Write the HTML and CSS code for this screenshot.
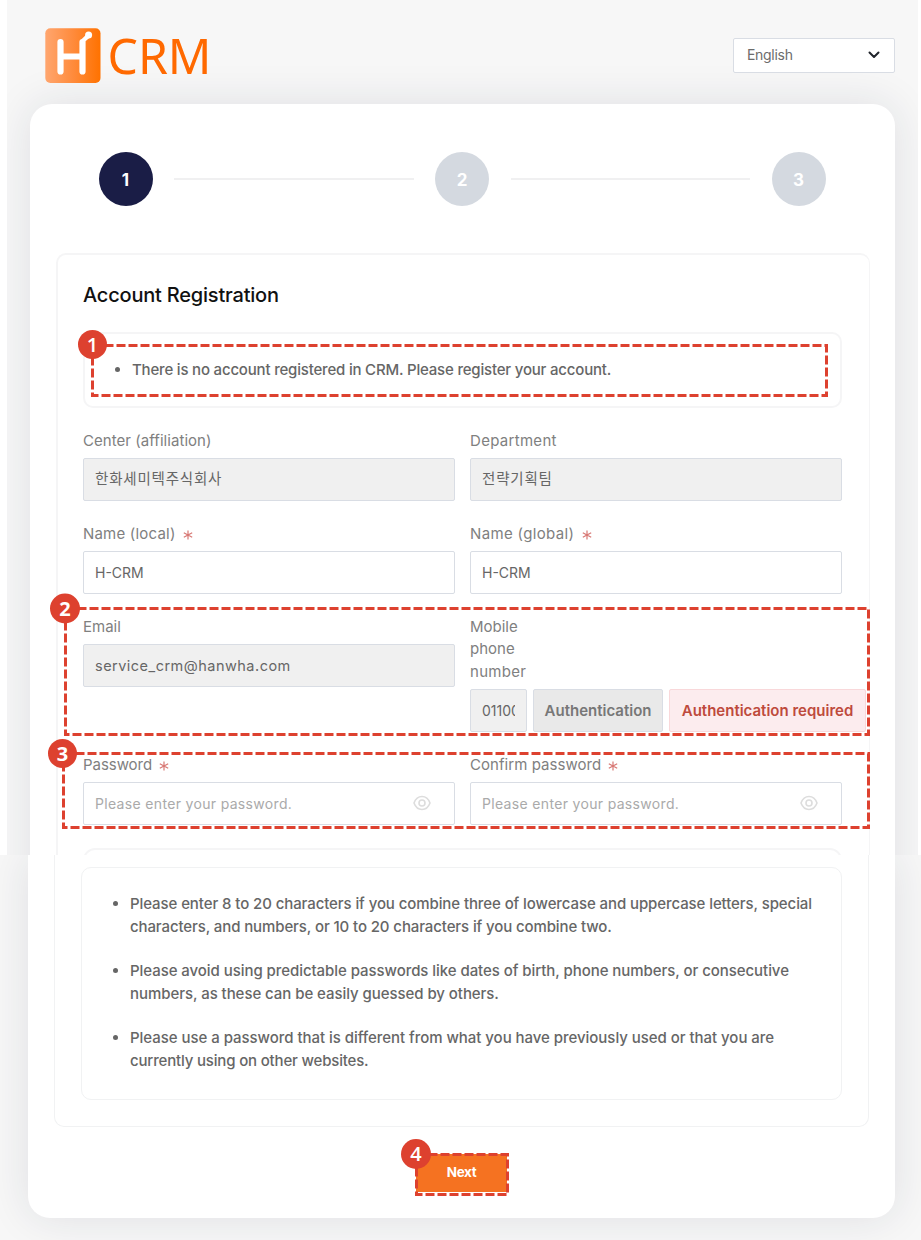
FILE: index.html
```html
<!DOCTYPE html>
<html lang="en">
<head>
<meta charset="utf-8">
<title>H CRM – Account Registration</title>
<link rel="stylesheet" href="styles.css">
</head>
<body>
<main class="page">
  <section class="upper">
    <header class="header">
      <svg class="logo" width="166" height="56" viewBox="0 0 166 56" role="img" aria-label="H CRM">
        <defs><linearGradient id="brand"><stop offset="0" stop-color="#ffa66f"/><stop offset=".5" stop-color="#ff8b3c"/><stop offset="1" stop-color="#ff7200"/></linearGradient></defs>
        <rect x=".3" y=".3" width="55.2" height="54.6" rx="5" fill="url(#brand)"/>
        <path d="M15.5 14v29.500M37.500 14v29.500M15.500 28.500h22" fill="none" stroke="#fff" stroke-width="6.200" stroke-linecap="round"/>
        <path d="M37.700 14c0-3 4.700-3.300 5.500-7" fill="none" stroke="#fff" stroke-width="4.500"/>
        <circle cx="43.600" cy="7" r="3.500" fill="#fff"/>
        <text x="62.500" y="45.700" class="logo-text" textLength="104" lengthAdjust="spacingAndGlyphs">CRM</text>
      </svg>
      <button class="language">English
        <svg width="12" height="8" viewBox="0 0 12 8"><path d="M1.500 1.500 6 6l4.500-4.500" fill="none" stroke="#20242b" stroke-width="2" stroke-linecap="round" stroke-linejoin="round"/></svg>
      </button>
    </header>
    <div class="card card-top">
      <div class="steps">
        <span class="step active">1</span><i class="line"></i><span class="step">2</span><i class="line"></i><span class="step">3</span>
      </div>
      <div class="frame frame-top">
        <h1 class="title">Account Registration</h1>
        <ul class="notice"><li>There is no account registered in CRM. Please register your account.</li></ul>
        <div class="fields">
          <div class="field"><label class="label l-center">Center (affiliation)</label><input class="input korean" value="한화세미텍주식회사" readonly></div>
          <div class="field"><label class="label l-dept">Department</label><input class="input korean" value="전략기획팀" readonly></div>
          <div class="field"><label class="label l-local">Name (local) <svg class="star" viewBox="0 0 10 10"><path d="M5 .5v9M.8 2.700l8.400 4.600M.8 7.300l8.400-4.600"/></svg></label><input class="input" value="H-CRM"></div>
          <div class="field"><label class="label l-global">Name (global) <svg class="star" viewBox="0 0 10 10"><path d="M5 .5v9M.8 2.700l8.400 4.600M.8 7.300l8.400-4.600"/></svg></label><input class="input" value="H-CRM"></div>
          <div class="field"><label class="label">Email</label><input class="input email" value="service_crm@hanwha.com" readonly></div>
          <div class="field">
            <label class="label phone-label">Mobile phone <span class="l-number">number</span></label>
            <div class="phone-row"><input class="input phone" value="01100" readonly><button class="auth">Authentication</button><span class="required">Authentication required</span></div>
          </div>
          <div class="field"><label class="label l-password">Password <svg class="star" viewBox="0 0 10 10"><path d="M5 .5v9M.8 2.700l8.400 4.600M.8 7.300l8.400-4.600"/></svg></label>
            <div class="input password"><span>Please enter your password.</span><svg class="eye" viewBox="0 0 18 16"><path d="M1 8c1.500-4 4.500-6.500 8-6.500S15.500 4 17 8c-1.500 4-4.500 6.500-8 6.500S2.500 12 1 8Z"/><circle cx="9" cy="8" r="3"/></svg></div></div>
          <div class="field"><label class="label l-confirm">Confirm password <svg class="star" viewBox="0 0 10 10"><path d="M5 .5v9M.8 2.700l8.400 4.600M.8 7.300l8.400-4.600"/></svg></label>
            <div class="input password"><span>Please enter your password.</span><svg class="eye" viewBox="0 0 18 16"><path d="M1 8c1.500-4 4.500-6.500 8-6.500S15.500 4 17 8c-1.500 4-4.500 6.500-8 6.500S2.500 12 1 8Z"/><circle cx="9" cy="8" r="3"/></svg></div></div>
        </div>
        <div class="next-box"></div>
      </div>
    </div>
  </section>
  <section class="lower">
    <div class="card card-bottom">
      <div class="frame frame-bottom">
        <ul class="rules">
          <li><span class="r1">Please enter 8 to 20 characters if you combine three of lowercase and uppercase letters, special</span><br><span class="r2">characters, and numbers, or 10 to 20 characters if you combine two.</span></li>
          <li><span class="r3">Please avoid using predictable passwords like dates of birth, phone numbers, or consecutive</span><br><span class="r4">numbers, as these can be easily guessed by others.</span></li>
          <li><span class="r5">Please use a password that is different from what you have previously used or that you are</span><br><span class="r6">currently using on other websites.</span></li>
        </ul>
      </div>
      <button class="next">Next</button>
    </div>
  </section>
  <svg class="marks" width="921" height="1240" viewBox="0 0 921 1240">
    <g class="dash">
      <rect x="92.500" y="345.500" width="734" height="50"/>
      <rect x="65.500" y="608.500" width="803" height="126"/>
      <rect x="63.500" y="753.500" width="805" height="74"/>
      <rect x="416.500" y="1154.500" width="91" height="40"/>
    </g>
    <g class="badge">
      <circle cx="92.500" cy="344.500" r="14.500"/><text x="92.500" y="351.500">1</text>
      <circle cx="65" cy="608.500" r="15"/><text class="strong" x="65" y="615.500">2</text>
      <circle cx="62.500" cy="753.500" r="14.500"/><text class="strong" x="62.500" y="760.500">3</text>
      <circle cx="416" cy="1154" r="15"/><text x="416" y="1161">4</text>
    </g>
  </svg>
</main>
</body>
</html>
```
FILE: styles.css
```css
* { box-sizing: border-box; }
body { margin: 0; background: #fff; font-family: Inter, "Noto Sans CJK KR", sans-serif; color: #666; }
button { font-family: inherit; }
.page { position: relative; width: 921px; height: 1240px; overflow: hidden; }
.upper { height: 855px; margin: 0 3px 0 7px; background: #f7f7f7; overflow: hidden; }
.lower { height: 385px; background: #f7f7f7; overflow: hidden; }
.header { height: 104px; padding: 28px 23px 0 38px; display: flex; justify-content: space-between; align-items: flex-start; }
.logo { overflow: visible; }
.logo-text { font: 49px "Noto Sans", sans-serif; fill: #ff6900; }
.language { margin-top: 10px; width: 162px; height: 35px; padding: 0 14px 2px 13px; display: flex; align-items: center; justify-content: space-between; border: 1px solid #d9dde4; border-radius: 2px; background: #fff; color: #6c6c6c; font-size: 14px; letter-spacing: -.3px; }

.card { background: #fff; box-shadow: 0 0 44px rgba(30, 38, 60, .11); }
.card-top { width: 865px; height: 800px; margin-left: 23px; padding: 48px 26px 0 25.500px; border-radius: 22px 22px 0 0; }
.card-bottom { width: 867px; height: 363px; margin-left: 28px; padding: 0 26px; border-radius: 0 0 22px 22px; display: flex; flex-direction: column; align-items: center; }
.steps { height: 54px; padding: 0 43.500px 0 43px; display: flex; align-items: center; gap: 21.500px; }
.step { width: 54px; height: 54px; flex: none; border-radius: 50%; background: #d4d9e0; color: #fff; font-size: 17px; font-weight: 700; line-height: 56px; text-align: center; }
.step.active { background: #1a1d46; }
.line { flex: 1; height: 2px; background: #f0f0f1; }

.frame { border: 1px solid #f1f2f3; }
.frame-top { width: 814px; height: 650px; margin-top: 47px; padding: 0 25.500px; border: 2px solid #f5f5f6; border-right-width: 1px; border-radius: 10px 10px 0 0; }
.title { margin: 26px 0 22px; color: #111; font-size: 20px; font-weight: 500; line-height: 29px; letter-spacing: -.2px; }
.notice { width: 759px; height: 76px; margin: 0; padding: 0 0 0 47px; border: 2px solid #f5f5f6; border-radius: 10px; font-size: 15px; font-weight: 500; line-height: 72px; letter-spacing: -.19px; }
.fields { width: 759px; margin-top: 21px; display: grid; grid-template-columns: 372px 372px; column-gap: 15px; row-gap: 21px; }
.label { display: block; height: 22.500px; margin-bottom: 6.500px; color: #808080; font-size: 15px; line-height: 23px; letter-spacing: 0; }
.l-center { letter-spacing: .05px; }
.l-dept { letter-spacing: .3px; }
.l-local { letter-spacing: .2px; }
.l-global { letter-spacing: .35px; }
.l-password { letter-spacing: -.05px; }
.l-confirm { letter-spacing: .05px; }
.phone-label { width: 62px; height: 67.500px; padding-top: .5px; line-height: 22.700px; }
.l-number { letter-spacing: .3px; }
.star { width: 10px; height: 10px; margin-left: 3px; vertical-align: -1px; fill: none; stroke: #d87874; stroke-width: 1.200; }
.input { display: block; width: 100%; height: 43px; padding: 0 11px 1px; border: 1px solid #d9dde4; border-radius: 2px; background: #fff; color: #666; font-family: inherit; font-size: 14px; outline: 0; }
.input[readonly] { background: #f0f0f0; }
.email { font-size: 14.500px; letter-spacing: .48px; }
.korean { padding-bottom: 4px; font-size: 14.500px; letter-spacing: .8px; }
.phone-row { display: flex; gap: 6px; width: 397px; }
.phone { width: 57px; }
.auth, .required { height: 43px; border: 1px solid #d9dde4; border-radius: 2px; font-size: 15px; font-weight: 600; line-height: 42px; text-align: center; white-space: nowrap; padding: 0; }
.auth { width: 130px; background: #e9e9e9; color: #777; }
.required { width: 197px; border-color: #f9d8da; background: #fcecee; color: #be4a3c; }
.password { display: flex; align-items: center; justify-content: space-between; padding-right: 23px; color: #aaa; letter-spacing: .33px; }
.eye { width: 18px; height: 16px; fill: none; stroke: #ddd; stroke-width: 1.600; }
.next-box { width: 759px; height: 60px; margin-top: 23px; border: 2px solid #f5f5f6; border-radius: 12px; }

.frame-bottom { width: 815px; height: 272px; border-top: 0; border-radius: 0 0 10px 10px; padding: 12px 26px 0; }
.rules { width: 761px; height: 233px; margin: 0; padding: 24px 0 0 48px; border: 1px solid #f1f2f3; border-radius: 10px; font-size: 15px; font-weight: 500; line-height: 23px; white-space: nowrap; }
.rules li { margin-bottom: 21px; }
.r1 { letter-spacing: -.09px; }
.r2 { letter-spacing: -.11px; }
.r3, .r4 { letter-spacing: -.06px; }
.r5 { letter-spacing: -.04px; }
.r6 { letter-spacing: -.17px; }
.next { width: 91px; height: 38px; margin-top: 27px; padding: 0 0 2px; border: 0; background: #f57221; color: #fff; font-size: 13.500px; font-weight: 700; letter-spacing: -.4px; }

.marks { position: absolute; inset: 0; pointer-events: none; }
.dash { fill: none; stroke: #dd412f; stroke-width: 3; stroke-dasharray: 9 3; }
.badge { fill: #dd412f; }
.badge text { fill: #fff; font: 600 20px "Open Sans", sans-serif; text-anchor: middle; }
.badge .strong { font-weight: 700; }
```
